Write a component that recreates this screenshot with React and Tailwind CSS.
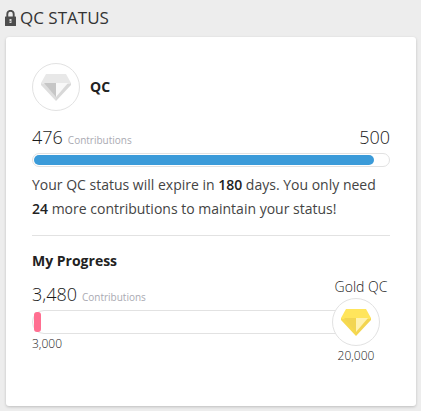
const GRAY = { crown: '#e8e8e8', left: '#c6c6c6', right: '#f8f8f8', edgeLeft: '#dedede', edgeRight: '#d8d8d8' }
const GOLD = { crown: '#ffe55c', left: '#f2d552', right: '#fff2b0', edgeLeft: '#f6d94f', edgeRight: '#f3d550' }

const status = { count: 476, goal: 500, days: 180, pct: 96 }
const level = { count: 3480, from: 3000, to: 20000, pct: 2 }

export default function App() {
  return (
    <div className="min-h-screen bg-[#ededed] pl-[5px] pr-[5px] pb-[5px] text-[#1a1a1a] font-['Open_Sans',sans-serif]">
      <h1 className="flex h-[37px] items-center gap-1 pb-0.5 text-[17px] font-normal text-[#333]">
        <LockIcon />
        QC STATUS
      </h1>

      <main className="ml-px rounded-[3px] bg-white px-[26px] pt-[26px] pb-[54px] shadow-[0_1px_3px_rgba(0,0,0,0.2)]">
        <div className="flex items-center gap-2.5">
          <Badge colors={GRAY} />
          <h2 className="text-sm font-bold text-[#222]">QC</h2>
        </div>

        {/* Current status */}
        <section className="border-b border-[#e2e2e2] pb-3.5">
          <div className="mt-3 flex items-baseline justify-between">
            <Count value={status.count} />
            <span className="text-lg leading-7 font-light">{status.goal}</span>
          </div>
          <Bar value={status.count} max={status.goal} pct={status.pct} className="h-3.5 rounded-full" fill="bg-[#3b9bd9] rounded-full" label="QC status" />
          <p className="mt-1.5 text-sm leading-6 text-[#444]">
            Your QC status will expire in <b className="font-semibold text-[#222]">{status.days}</b> days. You only need{' '}
            <b className="font-semibold text-[#222]">{status.goal - status.count}</b> more contributions to maintain your status!
          </p>
        </section>

        {/* Next level */}
        <section className="mt-[13px]">
          <h2 className="text-sm leading-6 font-bold text-[#222]">My Progress</h2>
          <div className="mt-[7px]">
            <Count value={level.count} />
          </div>
          <div className="relative">
            <Bar value={level.count} max={level.to} pct={level.pct} className="mr-8 h-6 rounded-l-full" fill="bg-[#ff6f91] rounded-[3px] min-w-[7px]" label="Progress to Gold QC" />
            <div className="absolute -top-8 right-0 flex flex-col items-center">
              <span className="mb-0.5 text-sm leading-[18px] font-light">Gold QC</span>
              <div className="mr-2.5 flex flex-col items-center">
                <Badge colors={GOLD} />
                <span className="text-xs leading-5 font-light">{level.to.toLocaleString('en-US')}</span>
              </div>
            </div>
          </div>
          <div className="mt-0.5 text-xs font-light">{level.from.toLocaleString('en-US')}</div>
        </section>
      </main>
    </div>
  )
}

function Count({ value }) {
  return (
    <div className="flex items-baseline gap-[5px]">
      <span className="text-lg leading-7 font-light">{value.toLocaleString('en-US')}</span>
      <span className="text-[10px] text-[#aaaab2]">Contributions</span>
    </div>
  )
}

function Bar({ value, max, pct, className, fill, label }) {
  return (
    <div
      role="progressbar"
      aria-label={label}
      aria-valuenow={value}
      aria-valuemax={max}
      className={`mt-0.5 border border-[#e2e2e2] bg-white p-px ${className}`}
    >
      <div className={`h-full ${fill}`} style={{ width: `${pct}%` }} />
    </div>
  )
}

function Badge({ colors }) {
  return (
    <div className="flex size-12 shrink-0 items-center justify-center rounded-full border border-[#e2e2e2] bg-white">
      <Diamond colors={colors} />
    </div>
  )
}

function Diamond({ colors }) {
  return (
    <svg width="30" height="28" viewBox="0 -1 30 28" aria-hidden="true">
      <path d="M0 9h15v18L0 11z" fill={colors.edgeLeft} />
      <path d="M30 9H15v18l15-16z" fill={colors.edgeRight} />
      <path d="M5 0h20l5 9-1 1H1L0 9z" fill={colors.crown} />
      <path d="M3 9h12v14z" fill={colors.left} />
      <path d="M27 9H15v14z" fill={colors.right} />
    </svg>
  )
}

function LockIcon() {
  return (
    <svg width="11" height="16" viewBox="0 0 11 16" aria-hidden="true">
      <path d="M2.3 7V4a3.2 3.2 0 0 1 6.4 0v3" fill="none" stroke="#4d4d4d" strokeWidth="1.9" />
      <rect y="6.5" width="11" height="9.5" rx="0.5" fill="#4d4d4d" />
      <path d="M4.5 9h2v4h-2z" fill="#d8d8d8" />
      <path d="M4.5 11h1v1h-1z" fill="#4d4d4d" />
    </svg>
  )
}
